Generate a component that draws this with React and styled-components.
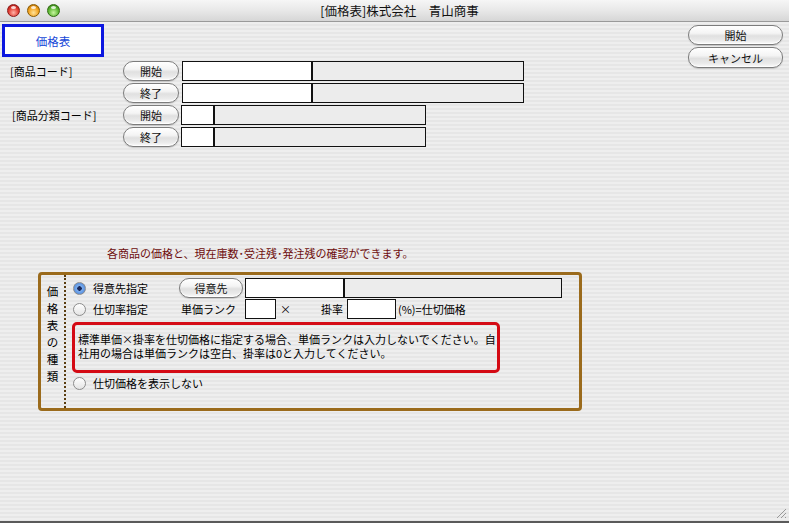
import React from "react";
import styled, { createGlobalStyle } from "styled-components";

const GlobalStyle = createGlobalStyle`
	html, body {
		margin: 0;
		padding: 0;
		background: #ececec;
	}
	body {
		font-family: "Noto Sans CJK JP", "Liberation Sans", sans-serif;
		font-size: 11px;
		color: #000;
	}
`;

const Window = styled.div`
	width: 789px;
	height: 523px;
	display: flex;
	flex-direction: column;
	box-sizing: border-box;
	border-bottom: 2px solid #5a5a5a;
	overflow: hidden;
	position: relative;
`;

const TitleBar = styled.div`
	height: 22px;
	flex: none;
	box-sizing: border-box;
	display: flex;
	align-items: center;
	padding-left: 7px;
	background: linear-gradient(#f6f6f6, #e8e8e8 50%, #d6d6d6);
	border-bottom: 1px solid #9a9a9a;
	position: relative;
`;

const Lights = styled.div`
	display: flex;
	gap: 7px;
`;

const Light = styled.span`
	width: 13px;
	height: 13px;
	border-radius: 50%;
	box-sizing: border-box;
	border: 1px solid ${(p) => p.$edge};
	background: radial-gradient(circle at 50% 70%, ${(p) => p.$hi} 0%, ${(p) => p.$base} 55%, ${(p) => p.$dark} 100%);
	position: relative;
	&::after {
		content: "";
		position: absolute;
		left: 3px;
		top: 1px;
		width: 5px;
		height: 3px;
		border-radius: 50%;
		background: rgba(255, 255, 255, 0.8);
	}
`;

const Title = styled.div`
	position: absolute;
	left: 0;
	right: 0;
	top: 0;
	height: 21px;
	line-height: 21px;
	text-align: center;
	font-size: 12.5px;
	color: #111;
	pointer-events: none;
	padding-left: 10px;
`;

const Body = styled.div`
	flex: 1;
	display: flex;
	background: repeating-linear-gradient(#eeeeee 0 2px, #e6e6e6 2px 4px);
`;

const Main = styled.div`
	flex: 1;
	padding: 2px 0 0 2px;
`;

const Side = styled.div`
	width: 95px;
	padding: 3px 6px 0 0;
	display: flex;
	flex-direction: column;
	gap: 2px;
`;

const TabBox = styled.div`
	width: 102px;
	height: 33px;
	box-sizing: border-box;
	border: 3px solid #0b16e0;
	background: #fff;
	color: #1747d8;
	display: flex;
	align-items: center;
	justify-content: center;
	font-size: 11.5px;
	margin-bottom: 4px;
`;

const Rows = styled.div`
	display: flex;
	flex-direction: column;
	gap: 2px;
`;

const Row = styled.div`
	display: flex;
	align-items: center;
	height: 20px;
`;

const RowLabel = styled.div`
	width: ${(p) => p.$w || 121}px;
	padding-left: ${(p) => p.$pad || 8}px;
	box-sizing: border-box;
	flex: none;
	white-space: nowrap;
`;

const PillButton = styled.button`
	width: ${(p) => p.$w}px;
	height: ${(p) => p.$h || 20}px;
	box-sizing: border-box;
	border: 1px solid #7c7c7c;
	border-radius: 10px;
	background: linear-gradient(#ffffff 0%, #f4f4f4 40%, #e0e0e0 55%, #eaeaea 80%, #fbfbfb 100%);
	box-shadow: inset 0 -1px 1px rgba(255, 255, 255, 0.8), 0 1px 1px rgba(0, 0, 0, 0.15);
	font-family: inherit;
	font-size: 11px;
	color: #111;
	padding: 0;
	margin-right: ${(p) => p.$mr || 0}px;
	flex: none;
	cursor: default;
`;

const Field = styled.div`
	width: ${(p) => p.$w}px;
	height: ${(p) => p.$h || 20}px;
	box-sizing: border-box;
	border: 1.5px solid #111;
	background: ${(p) => (p.$grey ? "#ececec" : "#fff")};
	margin-left: ${(p) => p.$ml || 0}px;
	flex: none;
`;

const Notice = styled.div`
	margin-top: 98px;
	padding-left: 105px;
	color: #6e0d0d;
	font-size: 11px;
	height: 16px;
	line-height: 16px;
`;

const Group = styled.div`
	margin: 11px 0 0 36px;
	width: 544px;
	height: 139px;
	box-sizing: border-box;
	border: 3px solid #9b6b1c;
	border-radius: 4px;
	display: flex;
`;

const GroupLabel = styled.div`
	width: 25px;
	flex: none;
	border-right: 2px dotted #5a3d10;
	display: flex;
	flex-direction: column;
	align-items: center;
	padding-top: 8px;
	box-sizing: border-box;
	font-size: 11.5px;
	line-height: 17px;
`;

const GroupBody = styled.div`
	flex: 1;
	padding: 3px 0 0 6px;
	display: flex;
	flex-direction: column;
`;

const RadioRow = styled.div`
	display: flex;
	align-items: center;
	height: 20px;
	margin-bottom: ${(p) => p.$mb || 0}px;
`;

const Radio = styled.span`
	width: 13px;
	height: 13px;
	box-sizing: border-box;
	border-radius: 50%;
	border: 1px solid #8c8c8c;
	background: ${(p) =>
		p.$on
			? "radial-gradient(circle, #1c2a5a 0 2px, #7fb0ee 2.5px, #3d7ad6 100%)"
			: "linear-gradient(#ffffff, #e4e4e4)"};
	margin: 0 7px 0 1px;
	flex: none;
`;

const RadioText = styled.span`
	width: ${(p) => p.$w || "auto"}px;
	flex: none;
	white-space: nowrap;
`;

const Inline = styled.span`
	white-space: nowrap;
	margin: 0 ${(p) => p.$mr || 0}px 0 ${(p) => p.$ml || 0}px;
	flex: none;
`;

const Warning = styled.div`
	width: 428px;
	height: 51px;
	box-sizing: border-box;
	border: 3px solid #d40a14;
	border-radius: 5px;
	padding: 7px 0 0 3px;
	font-size: 11px;
	margin: 3px 0 0;
	white-space: nowrap;
`;

const WarningLine = styled.div`
	height: 14px;
	line-height: 14px;
`;

const Grip = styled.svg`
	position: absolute;
	right: 2px;
	bottom: 2px;
`;

const Light3 = () => (
	<Lights>
		<Light $edge="#8a1a1a" $hi="#ffb3a8" $base="#e0392e" $dark="#9c1010" />
		<Light $edge="#8a5a00" $hi="#ffe39a" $base="#f2a11c" $dark="#a86300" />
		<Light $edge="#2f6a10" $hi="#c8f5a0" $base="#5bb630" $dark="#2b7010" />
	</Lights>
);

export default function App() {
	return (
		<Window>
			<GlobalStyle />
			<TitleBar>
				<Light3 />
				<Title>[価格表]株式会社　青山商事</Title>
			</TitleBar>
			<Body>
				<Main>
					<TabBox>価格表</TabBox>
					<Rows>
						<Row>
							<RowLabel>[商品コード]</RowLabel>
							<PillButton $w={56} $mr={3}>開始</PillButton>
							<Field $w={130} />
							<Field $w={212} $grey />
						</Row>
						<Row>
							<RowLabel />
							<PillButton $w={56} $mr={3}>終了</PillButton>
							<Field $w={130} />
							<Field $w={212} $grey />
						</Row>
						<Row>
							<RowLabel $pad={10}>[商品分類コード]</RowLabel>
							<PillButton $w={56} $mr={2}>開始</PillButton>
							<Field $w={33} />
							<Field $w={212} $grey />
						</Row>
						<Row>
							<RowLabel />
							<PillButton $w={56} $mr={2}>終了</PillButton>
							<Field $w={33} />
							<Field $w={212} $grey />
						</Row>
					</Rows>
					<Notice>各商品の価格と、現在庫数･受注残･発注残の確認ができます。</Notice>
					<Group>
						<GroupLabel>
							{"価格表の種類".split("").map((c) => (
								<span key={c}>{c}</span>
							))}
						</GroupLabel>
						<GroupBody>
							<RadioRow $mb={1}>
								<Radio $on />
								<RadioText $w={86}>得意先指定</RadioText>
								<PillButton $w={64} $mr={2}>得意先</PillButton>
								<Field $w={99} />
								<Field $w={218} $grey />
							</RadioRow>
							<RadioRow>
								<Radio />
								<RadioText $w={88}>仕切率指定</RadioText>
								<Inline $mr={9}>単価ランク</Inline>
								<Field $w={31} />
								<Inline $ml={4}>×</Inline>
								<Inline $ml={30} $mr={4}>掛率</Inline>
								<Field $w={49} />
								<Inline $ml={2}>(%)=仕切価格</Inline>
							</RadioRow>
							<Warning>
								<WarningLine>
									標準単価×掛率を仕切価格に指定する場合、単価ランクは入力しないでください。自
								</WarningLine>
								<WarningLine>社用の場合は単価ランクは空白、掛率は0と入力してください。</WarningLine>
							</Warning>
							<RadioRow>
								<Radio />
								<RadioText>仕切価格を表示しない</RadioText>
							</RadioRow>
						</GroupBody>
					</Group>
				</Main>
				<Side>
					<PillButton $w={95} $h={20}>開始</PillButton>
					<PillButton $w={95} $h={21}>キャンセル</PillButton>
				</Side>
			</Body>
			<Grip width="13" height="13" viewBox="0 0 13 13">
				<line x1="12" y1="3" x2="3" y2="12" stroke="#999" strokeWidth="1" />
				<line x1="12" y1="7" x2="7" y2="12" stroke="#999" strokeWidth="1" />
				<line x1="12" y1="11" x2="11" y2="12" stroke="#999" strokeWidth="1" />
			</Grip>
		</Window>
	);
}
